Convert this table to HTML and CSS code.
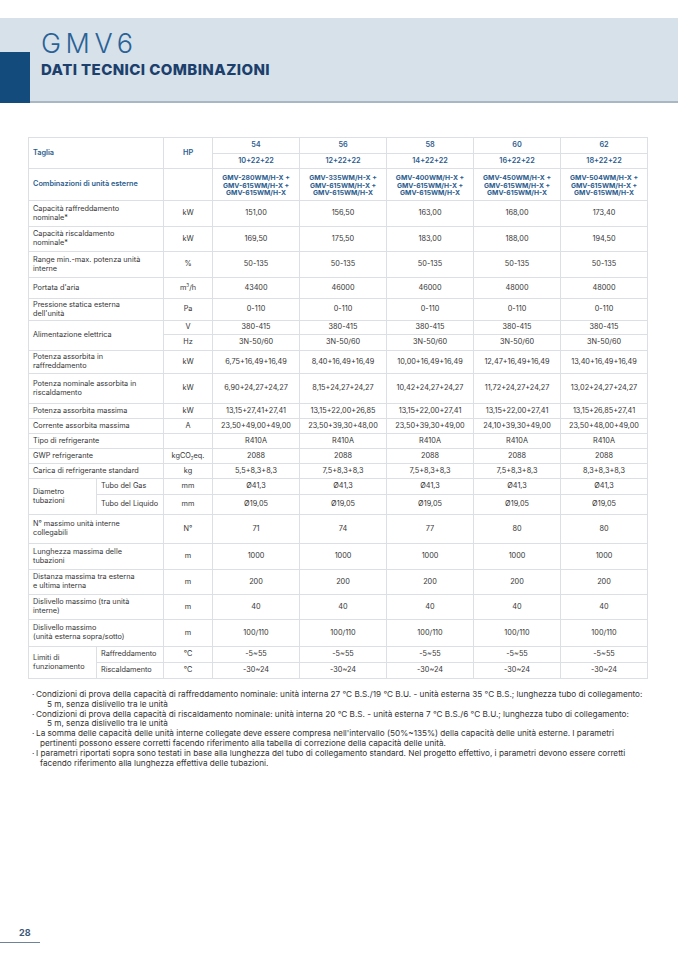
FILE: index.html
```html
<!DOCTYPE html>
<html lang="it">
<head>
<meta charset="utf-8">
<title>GMV6 - Dati tecnici combinazioni</title>
<link rel="stylesheet" href="styles.css">
</head>
<body>
<div class="page">
  <header class="band">
    <div class="mark"></div>
    <div class="titles">
      <div class="brand">GMV6</div>
      <h1 class="heading">DATI TECNICI COMBINAZIONI</h1>
    </div>
  </header>

  <table class="spec">
    <colgroup>
      <col class="c-lab1"><col class="c-lab2"><col class="c-unit">
      <col class="c-data"><col class="c-data"><col class="c-data"><col class="c-data"><col class="c-data">
    </colgroup>
    <tr class="h16 head">
      <td class="lab" colspan="2" rowspan="2">Taglia</td>
      <td class="unit" rowspan="2">HP</td>
      <td>54</td><td>56</td><td>58</td><td>60</td><td>62</td>
    </tr>
    <tr class="h15 head">
      <td>10+22+22</td><td>12+22+22</td><td>14+22+22</td><td>16+22+22</td><td>18+22+22</td>
    </tr>
    <tr class="h32 head">
      <td class="lab" colspan="2">Combinazioni di unità esterne</td>
      <td class="unit"></td>
      <td class="model">GMV-280WM/H-X +<br>GMV-615WM/H-X +<br>GMV-615WM/H-X</td>
      <td class="model">GMV-335WM/H-X +<br>GMV-615WM/H-X +<br>GMV-615WM/H-X</td>
      <td class="model">GMV-400WM/H-X +<br>GMV-615WM/H-X +<br>GMV-615WM/H-X</td>
      <td class="model">GMV-450WM/H-X +<br>GMV-615WM/H-X +<br>GMV-615WM/H-X</td>
      <td class="model">GMV-504WM/H-X +<br>GMV-615WM/H-X +<br>GMV-615WM/H-X</td>
    </tr>
    <tr class="h26">
      <td class="lab" colspan="2">Capacità raffreddamento<br>nominale*</td>
      <td class="unit">kW</td>
      <td>151,00</td><td>156,50</td><td>163,00</td><td>168,00</td><td>173,40</td>
    </tr>
    <tr class="h25">
      <td class="lab" colspan="2">Capacità riscaldamento<br>nominale*</td>
      <td class="unit">kW</td>
      <td>169,50</td><td>175,50</td><td>183,00</td><td>188,00</td><td>194,50</td>
    </tr>
    <tr class="h26">
      <td class="lab" colspan="2">Range min.-max. potenza unità<br>interne</td>
      <td class="unit">%</td>
      <td>50-135</td><td>50-135</td><td>50-135</td><td>50-135</td><td>50-135</td>
    </tr>
    <tr class="h21">
      <td class="lab" colspan="2">Portata d'aria</td>
      <td class="unit">m<sup>3</sup>/h</td>
      <td>43400</td><td>46000</td><td>46000</td><td>48000</td><td>48000</td>
    </tr>
    <tr class="h22">
      <td class="lab" colspan="2">Pressione statica esterna<br>dell'unità</td>
      <td class="unit">Pa</td>
      <td>0-110</td><td>0-110</td><td>0-110</td><td>0-110</td><td>0-110</td>
    </tr>
    <tr class="h14">
      <td class="lab" colspan="2" rowspan="2">Alimentazione elettrica</td>
      <td class="unit">V</td>
      <td>380-415</td><td>380-415</td><td>380-415</td><td>380-415</td><td>380-415</td>
    </tr>
    <tr class="h16">
      <td class="unit">Hz</td>
      <td>3N-50/60</td><td>3N-50/60</td><td>3N-50/60</td><td>3N-50/60</td><td>3N-50/60</td>
    </tr>
    <tr class="h23">
      <td class="lab" colspan="2">Potenza assorbita in<br>raffreddamento</td>
      <td class="unit">kW</td>
      <td>6,75+16,49+16,49</td><td>8,40+16,49+16,49</td><td>10,00+16,49+16,49</td><td>12,47+16,49+16,49</td><td>13,40+16,49+16,49</td>
    </tr>
    <tr class="h30">
      <td class="lab" colspan="2">Potenza nominale assorbita in<br>riscaldamento</td>
      <td class="unit">kW</td>
      <td>6,90+24,27+24,27</td><td>8,15+24,27+24,27</td><td>10,42+24,27+24,27</td><td>11,72+24,27+24,27</td><td>13,02+24,27+24,27</td>
    </tr>
    <tr class="h15">
      <td class="lab" colspan="2">Potenza assorbita massima</td>
      <td class="unit">kW</td>
      <td>13,15+27,41+27,41</td><td>13,15+22,00+26,85</td><td>13,15+22,00+27,41</td><td>13,15+22,00+27,41</td><td>13,15+26,85+27,41</td>
    </tr>
    <tr class="h15">
      <td class="lab" colspan="2">Corrente assorbita massima</td>
      <td class="unit">A</td>
      <td>23,50+49,00+49,00</td><td>23,50+39,30+48,00</td><td>23,50+39,30+49,00</td><td>24,10+39,30+49,00</td><td>23,50+48,00+49,00</td>
    </tr>
    <tr class="h15">
      <td class="lab" colspan="2">Tipo di refrigerante</td>
      <td class="unit"></td>
      <td>R410A</td><td>R410A</td><td>R410A</td><td>R410A</td><td>R410A</td>
    </tr>
    <tr class="h15">
      <td class="lab" colspan="2">GWP refrigerante</td>
      <td class="unit">kgCO<sub>2</sub>eq.</td>
      <td>2088</td><td>2088</td><td>2088</td><td>2088</td><td>2088</td>
    </tr>
    <tr class="h15">
      <td class="lab" colspan="2">Carica di refrigerante standard</td>
      <td class="unit">kg</td>
      <td>5,5+8,3+8,3</td><td>7,5+8,3+8,3</td><td>7,5+8,3+8,3</td><td>7,5+8,3+8,3</td><td>8,3+8,3+8,3</td>
    </tr>
    <tr class="h16">
      <td class="lab" rowspan="2">Diametro<br>tubazioni</td>
      <td class="lab">Tubo del Gas</td>
      <td class="unit">mm</td>
      <td>Ø41,3</td><td>Ø41,3</td><td>Ø41,3</td><td>Ø41,3</td><td>Ø41,3</td>
    </tr>
    <tr class="h20">
      <td class="lab">Tubo del Liquido</td>
      <td class="unit">mm</td>
      <td>Ø19,05</td><td>Ø19,05</td><td>Ø19,05</td><td>Ø19,05</td><td>Ø19,05</td>
    </tr>
    <tr class="h29">
      <td class="lab" colspan="2">N° massimo unità interne<br>collegabili</td>
      <td class="unit">N°</td>
      <td>71</td><td>74</td><td>77</td><td>80</td><td>80</td>
    </tr>
    <tr class="h26">
      <td class="lab" colspan="2">Lunghezza massima delle<br>tubazioni</td>
      <td class="unit">m</td>
      <td>1000</td><td>1000</td><td>1000</td><td>1000</td><td>1000</td>
    </tr>
    <tr class="h25">
      <td class="lab" colspan="2">Distanza massima tra esterna<br>e ultima interna</td>
      <td class="unit">m</td>
      <td>200</td><td>200</td><td>200</td><td>200</td><td>200</td>
    </tr>
    <tr class="h25">
      <td class="lab" colspan="2">Dislivello massimo (tra unità<br>interne)</td>
      <td class="unit">m</td>
      <td>40</td><td>40</td><td>40</td><td>40</td><td>40</td>
    </tr>
    <tr class="h27">
      <td class="lab" colspan="2">Dislivello massimo<br>(unità esterna sopra/sotto)</td>
      <td class="unit">m</td>
      <td>100/110</td><td>100/110</td><td>100/110</td><td>100/110</td><td>100/110</td>
    </tr>
    <tr class="h16">
      <td class="lab" rowspan="2">Limiti di<br>funzionamento</td>
      <td class="lab">Raffreddamento</td>
      <td class="unit">°C</td>
      <td>-5~55</td><td>-5~55</td><td>-5~55</td><td>-5~55</td><td>-5~55</td>
    </tr>
    <tr class="h16">
      <td class="lab">Riscaldamento</td>
      <td class="unit">°C</td>
      <td>-30~24</td><td>-30~24</td><td>-30~24</td><td>-30~24</td><td>-30~24</td>
    </tr>
  </table>

  <ul class="notes">
    <li><span class="dot">·</span>Condizioni di prova della capacità di raffreddamento nominale: unità interna 27 °C B.S./19 °C B.U. - unità esterna 35 °C B.S.; lunghezza tubo di collegamento:<br><span class="in1">5 m, senza dislivello tra le unità</span></li>
    <li><span class="dot">·</span>Condizioni di prova della capacità di riscaldamento nominale: unità interna 20 °C B.S. - unità esterna 7 °C B.S./6 °C B.U.; lunghezza tubo di collegamento:<br><span class="in1">5 m, senza dislivello tra le unità</span></li>
    <li><span class="dot">·</span>La somma delle capacità delle unità interne collegate deve essere compresa nell'intervallo (50%~135%) della capacità delle unità esterne. I parametri<br><span class="in2">pertinenti possono essere corretti facendo riferimento alla tabella di correzione della capacità delle unità.</span></li>
    <li><span class="dot">·</span>I parametri riportati sopra sono testati in base alla lunghezza del tubo di collegamento standard. Nel progetto effettivo, i parametri devono essere corretti<br><span class="in2">facendo riferimento alla lunghezza effettiva delle tubazioni.</span></li>
  </ul>

  <footer class="foot">
    <div class="pagenum">28</div>
  </footer>
</div>
</body>
</html>
```

FILE: styles.css
```css
html, body {
  margin: 0;
  padding: 0;
  background: #ffffff;
}

.page {
  width: 678px;
  height: 959px;
  display: flex;
  flex-direction: column;
  font-family: "Inter", "Liberation Sans", sans-serif;
  color: #3a3a3a;
  box-sizing: border-box;
  overflow: hidden;
}

/* Header band */
.band {
  margin-top: 18px;
  height: 85px;
  box-sizing: border-box;
  background: #d6e1ea;
  border-bottom: 2px solid #a9b6c3;
  display: flex;
  align-items: flex-end;
}

.mark {
  width: 30px;
  height: 51px;
  margin-bottom: -2px;
  background: #144b7d;
  flex: none;
}

.titles {
  align-self: stretch;
  padding-left: 11px;
  padding-top: 12px;
}

.brand {
  font-size: 27px;
  line-height: 28px;
  font-weight: 300;
  letter-spacing: 4.5px;
  color: #2a6196;
}

.heading {
  margin: 3px 0 0 0;
  font-size: 15px;
  line-height: 17px;
  font-weight: 800;
  letter-spacing: 0.4px;
  color: #1c3f6c;
}

/* Table */
.spec {
  margin: 34px 0 0 28px;
  width: 620px;
  border-collapse: collapse;
  table-layout: fixed;
  font-size: 7.3px;
  line-height: 8.6px;
}

.c-lab1 { width: 68px; }
.c-lab2 { width: 67px; }
.c-unit { width: 49px; }
.c-data { width: 87px; }

.spec td {
  border: 1px solid #dcdfe3;
  padding: 0;
  text-align: center;
  vertical-align: middle;
  color: #353535;
}

.spec td.lab {
  text-align: left;
  padding-left: 4px;
}

.spec .head td {
  color: #2c5d8e;
  font-weight: 600;
}

.spec td.model {
  font-size: 6.8px;
  line-height: 7.8px;
  font-weight: 700;
  color: #2c5d8e;
  padding-top: 2px;
}

.spec sup, .spec sub {
  font-size: 4.5px;
  line-height: 0;
}

.h14 { height: 14px; }
.h15 { height: 15px; }
.h16 { height: 16px; }
.h20 { height: 20px; }
.h21 { height: 21px; }
.h22 { height: 22px; }
.h23 { height: 23px; }
.h25 { height: 25px; }
.h26 { height: 26px; }
.h27 { height: 27px; }
.h29 { height: 29px; }
.h30 { height: 30px; }
.h32 { height: 32px; }

/* Notes */
.notes {
  list-style: none;
  margin: 11px 0 0 0;
  padding: 0 0 0 32px;
  font-size: 8.2px;
  line-height: 9.8px;
  color: #333333;
  white-space: nowrap;
}

.notes li {
  margin: 0;
}

.dot {
  display: inline-block;
  width: 4px;
}

.in1 { padding-left: 15px; }
.in2 { padding-left: 8px; }

/* Footer */
.foot {
  margin-top: auto;
  margin-bottom: 16px;
  width: 40px;
  border-bottom: 1.5px solid #6e8298;
  padding-bottom: 4px;
}

.pagenum {
  padding-left: 19px;
  font-size: 9px;
  line-height: 11px;
  font-weight: 700;
  color: #3c5878;
}
```
